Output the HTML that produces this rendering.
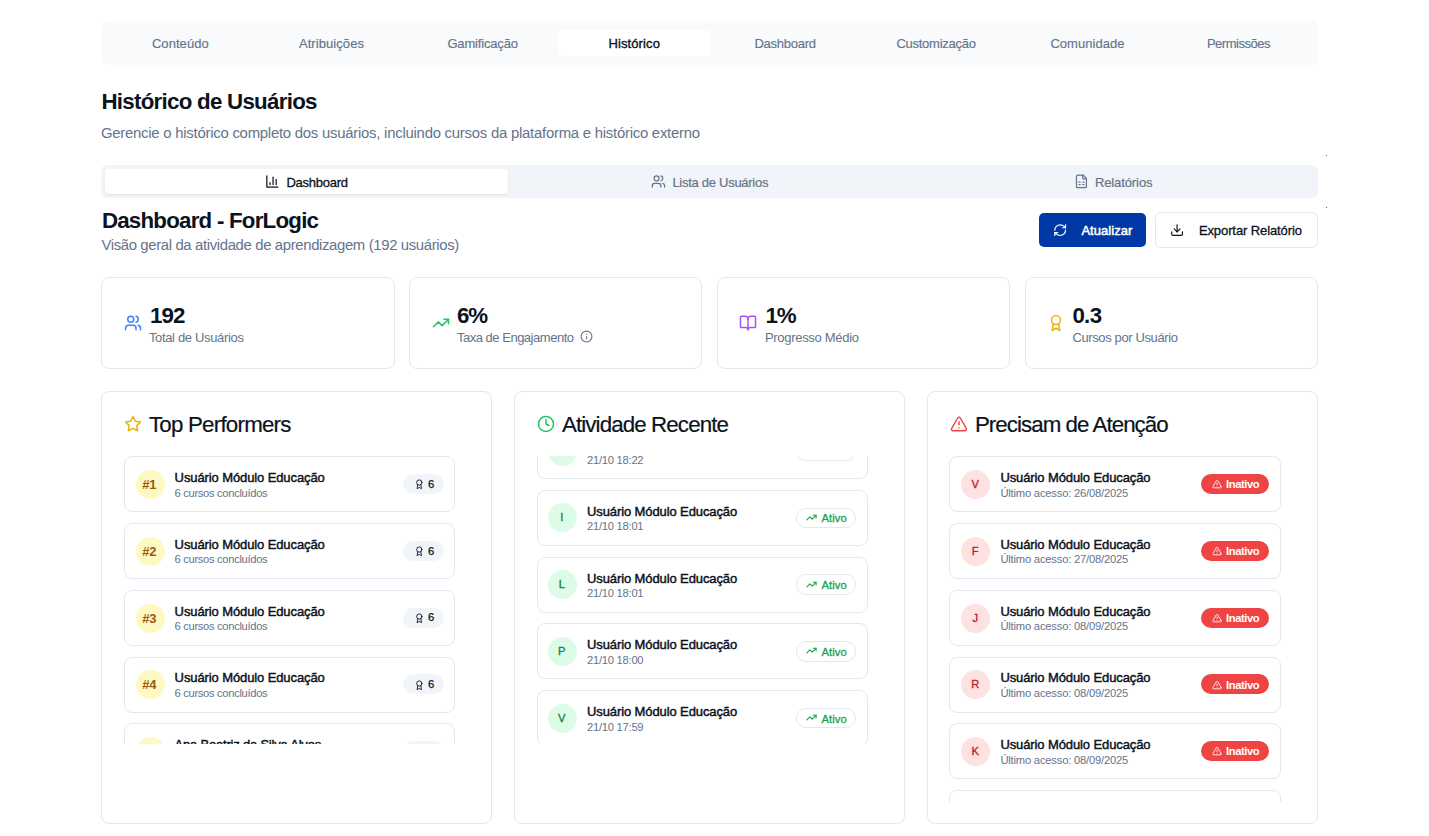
<!DOCTYPE html>
<html lang="pt-BR"><head><meta charset="utf-8"><title>Histórico de Usuários</title><style>
html,body{margin:0;padding:0;background:#fff;}
body{width:1429px;height:836px;overflow:hidden;position:relative;font-family:"Liberation Sans",Arial,sans-serif;}
body div,body svg{position:absolute;}
.t{white-space:nowrap;line-height:1;}
.clip{overflow:hidden;}
</style></head><body>
<div style="left:101.00px;top:21.00px;width:1217.00px;height:44.00px;background:#f8fafc;border-radius:7px;"></div>
<div style="left:558.00px;top:30.00px;width:152.00px;height:26.00px;background:#fff;border-radius:5px;"></div>
<div class="t" style="left:151.90px;top:37.00px;font-size:13px;color:#64748b;letter-spacing:0.068px;-webkit-text-stroke:0.15px #64748b;">Conteúdo</div>
<div class="t" style="left:298.90px;top:37.00px;font-size:13px;color:#64748b;letter-spacing:0.073px;-webkit-text-stroke:0.15px #64748b;">Atribuições</div>
<div class="t" style="left:447.40px;top:37.00px;font-size:13px;color:#64748b;letter-spacing:-0.165px;-webkit-text-stroke:0.15px #64748b;">Gamificação</div>
<div class="t" style="left:608.40px;top:37.00px;font-size:13px;color:#0b1220;letter-spacing:0.122px;-webkit-text-stroke:0.35px #0b1220;">Histórico</div>
<div class="t" style="left:754.40px;top:37.00px;font-size:13px;color:#64748b;letter-spacing:-0.253px;-webkit-text-stroke:0.15px #64748b;">Dashboard</div>
<div class="t" style="left:896.40px;top:37.00px;font-size:13px;color:#64748b;letter-spacing:-0.252px;-webkit-text-stroke:0.15px #64748b;">Customização</div>
<div class="t" style="left:1050.40px;top:37.00px;font-size:13px;color:#64748b;letter-spacing:0.039px;-webkit-text-stroke:0.15px #64748b;">Comunidade</div>
<div class="t" style="left:1206.90px;top:37.00px;font-size:13px;color:#64748b;letter-spacing:-0.475px;-webkit-text-stroke:0.15px #64748b;">Permissões</div>
<div class="t" style="left:101.40px;top:91.12px;font-size:22.3px;color:#0b1220;letter-spacing:-0.721px;font-weight:700;">Histórico de Usuários</div>
<div class="t" style="left:100.90px;top:126.39px;font-size:14.9px;color:#64748b;letter-spacing:-0.241px;">Gerencie o histórico completo dos usuários, incluindo cursos da plataforma e histórico externo</div>
<div style="left:101.00px;top:165.00px;width:1217.00px;height:33.00px;background:#f1f5f9;border-radius:6px;"></div>
<div style="left:105.00px;top:169.00px;width:403.00px;height:25.00px;background:#fff;border-radius:4px;box-shadow:0 1px 2px rgba(0,0,0,.08);"></div>
<svg class="ic" style="left:264.80px;top:173.80px" width="14.9" height="14.9" viewBox="0 0 24 24" fill="none" stroke="#0b1220" stroke-width="2" stroke-linecap="round" stroke-linejoin="round"><path d="M3 3v18h18"/><path d="M18 17V9"/><path d="M13 17V5"/><path d="M8 17v-3"/></svg>
<div class="t" style="left:286.40px;top:176.00px;font-size:13px;color:#0b1220;letter-spacing:-0.253px;-webkit-text-stroke:0.3px #0b1220;">Dashboard</div>
<svg class="ic" style="left:650.90px;top:173.80px" width="14.9" height="14.9" viewBox="0 0 24 24" fill="none" stroke="#64748b" stroke-width="2" stroke-linecap="round" stroke-linejoin="round"><path d="M16 21v-2a4 4 0 0 0-4-4H6a4 4 0 0 0-4 4v2"/><circle cx="9" cy="7" r="4"/><path d="M22 21v-2a4 4 0 0 0-3-3.87"/><path d="M16 3.13a4 4 0 0 1 0 7.75"/></svg>
<div class="t" style="left:672.40px;top:176.00px;font-size:13px;color:#64748b;letter-spacing:-0.275px;-webkit-text-stroke:0.2px #64748b;">Lista de Usuários</div>
<svg class="ic" style="left:1073.60px;top:173.90px" width="14.9" height="14.9" viewBox="0 0 24 24" fill="none" stroke="#64748b" stroke-width="2" stroke-linecap="round" stroke-linejoin="round"><path d="M15 2H6a2 2 0 0 0-2 2v16a2 2 0 0 0 2 2h12a2 2 0 0 0 2-2V7Z"/><path d="M14 2v4a2 2 0 0 0 2 2h4"/><path d="M8 13h2"/><path d="M14 13h2"/><path d="M8 17h2"/><path d="M14 17h2"/></svg>
<div class="t" style="left:1094.90px;top:176.00px;font-size:13px;color:#64748b;letter-spacing:-0.100px;-webkit-text-stroke:0.2px #64748b;">Relatórios</div>
<div style="left:1325.50px;top:154.50px;width:1.00px;height:1.00px;background:#e33;"></div>
<div style="left:1326.00px;top:206.50px;width:1.00px;height:1.00px;background:#e33;"></div>
<div class="t" style="left:101.90px;top:210.12px;font-size:22.3px;color:#0b1220;letter-spacing:-0.765px;font-weight:700;">Dashboard - ForLogic</div>
<div class="t" style="left:101.40px;top:237.89px;font-size:14.9px;color:#64748b;letter-spacing:-0.359px;">Visão geral da atividade de aprendizagem (192 usuários)</div>
<div style="left:1039.00px;top:213.00px;width:107.00px;height:34.00px;background:#0039a6;border-radius:5px;"></div>
<svg class="ic" style="left:1052.80px;top:223.00px" width="14.3" height="14.3" viewBox="0 0 24 24" fill="none" stroke="#fff" stroke-width="2" stroke-linecap="round" stroke-linejoin="round"><path d="M3 12a9 9 0 0 1 9-9 9.75 9.75 0 0 1 6.74 2.74L21 8"/><path d="M21 3v5h-5"/><path d="M21 12a9 9 0 0 1-9 9 9.75 9.75 0 0 1-6.74-2.74L3 16"/><path d="M8 16H3v5"/></svg>
<div class="t" style="left:1081.40px;top:224.00px;font-size:13px;color:#fff;letter-spacing:0.059px;-webkit-text-stroke:0.5px #fff;">Atualizar</div>
<div style="left:1155.00px;top:212.00px;width:163.00px;height:36.00px;background:#fff;border:1px solid #e2e8f0;border-radius:6px;box-sizing:border-box;"></div>
<svg class="ic" style="left:1169.90px;top:223.00px" width="14.2" height="14.2" viewBox="0 0 24 24" fill="none" stroke="#0b1220" stroke-width="2" stroke-linecap="round" stroke-linejoin="round"><path d="M21 15v4a2 2 0 0 1-2 2H5a2 2 0 0 1-2-2v-4"/><polyline points="7 10 12 15 17 10"/><line x1="12" x2="12" y1="15" y2="3"/></svg>
<div class="t" style="left:1198.90px;top:224.00px;font-size:13px;color:#0b1220;letter-spacing:-0.097px;-webkit-text-stroke:0.3px #0b1220;">Exportar Relatório</div>
<div style="left:101.00px;top:277.00px;width:294.00px;height:92.00px;background:#fff;border:1px solid #e2e8f0;border-radius:8px;box-sizing:border-box;"></div>
<svg class="ic" style="left:124.25px;top:314.30px" width="18" height="18" viewBox="0 0 24 24" fill="none" stroke="#3b82f6" stroke-width="2" stroke-linecap="round" stroke-linejoin="round"><path d="M16 21v-2a4 4 0 0 0-4-4H6a4 4 0 0 0-4 4v2"/><circle cx="9" cy="7" r="4"/><path d="M22 21v-2a4 4 0 0 0-3-3.87"/><path d="M16 3.13a4 4 0 0 1 0 7.75"/></svg>
<div class="t" style="left:149.90px;top:305.12px;font-size:22.3px;color:#0b1220;letter-spacing:-0.804px;font-weight:700;">192</div>
<div class="t" style="left:148.90px;top:331.00px;font-size:13px;color:#64748b;letter-spacing:-0.338px;">Total de Usuários</div>
<div style="left:409.00px;top:277.00px;width:293.00px;height:92.00px;background:#fff;border:1px solid #e2e8f0;border-radius:8px;box-sizing:border-box;"></div>
<svg class="ic" style="left:432.25px;top:314.30px" width="18" height="18" viewBox="0 0 24 24" fill="none" stroke="#22c55e" stroke-width="2" stroke-linecap="round" stroke-linejoin="round"><polyline points="22 7 13.5 15.5 8.5 10.5 2 17"/><polyline points="16 7 22 7 22 13"/></svg>
<div class="t" style="left:456.90px;top:305.12px;font-size:22.3px;color:#0b1220;letter-spacing:-1.097px;font-weight:700;">6%</div>
<div class="t" style="left:456.90px;top:331.00px;font-size:13px;color:#64748b;letter-spacing:-0.481px;">Taxa de Engajamento</div>
<div style="left:717.00px;top:277.00px;width:293.00px;height:92.00px;background:#fff;border:1px solid #e2e8f0;border-radius:8px;box-sizing:border-box;"></div>
<svg class="ic" style="left:738.75px;top:314.30px" width="18" height="18" viewBox="0 0 24 24" fill="none" stroke="#a855f7" stroke-width="2" stroke-linecap="round" stroke-linejoin="round"><path d="M12 7v14"/><path d="M3 18a1 1 0 0 1-1-1V4a1 1 0 0 1 1-1h5a4 4 0 0 1 4 4 4 4 0 0 1 4-4h5a1 1 0 0 1 1 1v13a1 1 0 0 1-1 1h-6a3 3 0 0 0-3 3 3 3 0 0 0-3-3z"/></svg>
<div class="t" style="left:765.40px;top:305.12px;font-size:22.3px;color:#0b1220;letter-spacing:-1.097px;font-weight:700;">1%</div>
<div class="t" style="left:764.90px;top:331.00px;font-size:13px;color:#64748b;letter-spacing:-0.296px;">Progresso Médio</div>
<div style="left:1025.00px;top:277.00px;width:293.00px;height:92.00px;background:#fff;border:1px solid #e2e8f0;border-radius:8px;box-sizing:border-box;"></div>
<svg class="ic" style="left:1046.75px;top:314.30px" width="18" height="18" viewBox="0 0 24 24" fill="none" stroke="#eab308" stroke-width="2" stroke-linecap="round" stroke-linejoin="round"><circle cx="12" cy="8" r="6"/><path d="M15.477 12.89 17 22l-5-3-5 3 1.523-9.11"/></svg>
<div class="t" style="left:1072.40px;top:305.12px;font-size:22.3px;color:#0b1220;letter-spacing:-0.672px;font-weight:700;">0.3</div>
<div class="t" style="left:1072.40px;top:331.00px;font-size:13px;color:#64748b;letter-spacing:-0.376px;">Cursos por Usuário</div>
<svg class="ic" style="left:580.00px;top:330.40px" width="13" height="13" viewBox="0 0 24 24" fill="none" stroke="#64748b" stroke-width="2" stroke-linecap="round" stroke-linejoin="round"><circle cx="12" cy="12" r="10"/><path d="M12 16v-4"/><path d="M12 8h.01"/></svg>
<div style="left:101.00px;top:391.00px;width:391.00px;height:433.00px;background:#fff;border:1px solid #e2e8f0;border-radius:8px;box-sizing:border-box;"></div>
<svg class="ic" style="left:124.25px;top:415.40px" width="18" height="18" viewBox="0 0 24 24" fill="none" stroke="#eab308" stroke-width="2" stroke-linecap="round" stroke-linejoin="round"><polygon points="12 2 15.09 8.26 22 9.27 17 14.14 18.18 21.02 12 17.77 5.82 21.02 7 14.14 2 9.27 8.91 8.26 12 2"/></svg>
<div class="t" style="left:148.90px;top:413.62px;font-size:22.3px;color:#0b1220;letter-spacing:-0.759px;-webkit-text-stroke:0.2px #0b1220;">Top Performers</div>
<div style="left:514.00px;top:391.00px;width:391.00px;height:433.00px;background:#fff;border:1px solid #e2e8f0;border-radius:8px;box-sizing:border-box;"></div>
<svg class="ic" style="left:536.75px;top:415.40px" width="18" height="18" viewBox="0 0 24 24" fill="none" stroke="#22c55e" stroke-width="2" stroke-linecap="round" stroke-linejoin="round"><circle cx="12" cy="12" r="10"/><polyline points="12 6 12 12 16 14"/></svg>
<div class="t" style="left:561.90px;top:413.62px;font-size:22.3px;color:#0b1220;letter-spacing:-0.871px;-webkit-text-stroke:0.2px #0b1220;">Atividade Recente</div>
<div style="left:927.30px;top:391.00px;width:391.00px;height:433.00px;background:#fff;border:1px solid #e2e8f0;border-radius:8px;box-sizing:border-box;"></div>
<svg class="ic" style="left:949.50px;top:415.40px" width="18" height="18" viewBox="0 0 24 24" fill="none" stroke="#ef4444" stroke-width="2" stroke-linecap="round" stroke-linejoin="round"><path d="m21.73 18-8-14a2 2 0 0 0-3.48 0l-8 14A2 2 0 0 0 4 21h16a2 2 0 0 0 1.73-3Z"/><path d="M12 9v4"/><path d="M12 17h.01"/></svg>
<div class="t" style="left:974.90px;top:413.62px;font-size:22.3px;color:#0b1220;letter-spacing:-0.940px;-webkit-text-stroke:0.2px #0b1220;">Precisam de Atenção</div>
<div class="clip" style="left:124.00px;top:456.00px;width:333.00px;height:287.50px">
<div style="left:0.00px;top:0.00px;width:331.00px;height:56.00px;border:1px solid #e2e8f0;border-radius:8px;box-sizing:border-box;background:#fff;"></div>
<div style="left:11.50px;top:14.00px;width:29.00px;height:29.00px;background:#fef9c3;border-radius:50%;"></div>
<div class="t" style="left:18.15px;top:22.00px;font-size:13px;color:#9a5b08;font-weight:700;">#1</div>
<div class="t" style="left:50.60px;top:15.00px;font-size:13px;color:#0b1220;letter-spacing:-0.105px;-webkit-text-stroke:0.45px #0b1220;">Usuário Módulo Educação</div>
<div class="t" style="left:50.60px;top:31.52px;font-size:11.2px;color:#64748b;letter-spacing:-0.324px;">6 cursos concluídos</div>
<div style="left:278.50px;top:18.00px;width:41.00px;height:20.00px;background:#f1f5f9;border-radius:10px;"></div>
<svg class="ic" style="left:289.50px;top:23.20px" width="10.6" height="10.6" viewBox="0 0 24 24" fill="none" stroke="#0b1220" stroke-width="2" stroke-linecap="round" stroke-linejoin="round"><circle cx="12" cy="8" r="6"/><path d="M15.477 12.89 17 22l-5-3-5 3 1.523-9.11"/></svg>
<div class="t" style="left:304.00px;top:22.82px;font-size:11.2px;color:#0b1220;-webkit-text-stroke:0.25px #0b1220;">6</div>
<div style="left:0.00px;top:67.00px;width:331.00px;height:56.00px;border:1px solid #e2e8f0;border-radius:8px;box-sizing:border-box;background:#fff;"></div>
<div style="left:11.50px;top:80.80px;width:29.00px;height:29.00px;background:#fef9c3;border-radius:50%;"></div>
<div class="t" style="left:18.15px;top:88.80px;font-size:13px;color:#9a5b08;font-weight:700;">#2</div>
<div class="t" style="left:50.60px;top:81.80px;font-size:13px;color:#0b1220;letter-spacing:-0.105px;-webkit-text-stroke:0.45px #0b1220;">Usuário Módulo Educação</div>
<div class="t" style="left:50.60px;top:98.32px;font-size:11.2px;color:#64748b;letter-spacing:-0.324px;">6 cursos concluídos</div>
<div style="left:278.50px;top:84.80px;width:41.00px;height:20.00px;background:#f1f5f9;border-radius:10px;"></div>
<svg class="ic" style="left:289.50px;top:90.00px" width="10.6" height="10.6" viewBox="0 0 24 24" fill="none" stroke="#0b1220" stroke-width="2" stroke-linecap="round" stroke-linejoin="round"><circle cx="12" cy="8" r="6"/><path d="M15.477 12.89 17 22l-5-3-5 3 1.523-9.11"/></svg>
<div class="t" style="left:304.00px;top:89.62px;font-size:11.2px;color:#0b1220;-webkit-text-stroke:0.25px #0b1220;">6</div>
<div style="left:0.00px;top:134.00px;width:331.00px;height:56.00px;border:1px solid #e2e8f0;border-radius:8px;box-sizing:border-box;background:#fff;"></div>
<div style="left:11.50px;top:147.60px;width:29.00px;height:29.00px;background:#fef9c3;border-radius:50%;"></div>
<div class="t" style="left:18.15px;top:155.60px;font-size:13px;color:#9a5b08;font-weight:700;">#3</div>
<div class="t" style="left:50.60px;top:148.60px;font-size:13px;color:#0b1220;letter-spacing:-0.105px;-webkit-text-stroke:0.45px #0b1220;">Usuário Módulo Educação</div>
<div class="t" style="left:50.60px;top:165.12px;font-size:11.2px;color:#64748b;letter-spacing:-0.324px;">6 cursos concluídos</div>
<div style="left:278.50px;top:151.60px;width:41.00px;height:20.00px;background:#f1f5f9;border-radius:10px;"></div>
<svg class="ic" style="left:289.50px;top:156.80px" width="10.6" height="10.6" viewBox="0 0 24 24" fill="none" stroke="#0b1220" stroke-width="2" stroke-linecap="round" stroke-linejoin="round"><circle cx="12" cy="8" r="6"/><path d="M15.477 12.89 17 22l-5-3-5 3 1.523-9.11"/></svg>
<div class="t" style="left:304.00px;top:156.42px;font-size:11.2px;color:#0b1220;-webkit-text-stroke:0.25px #0b1220;">6</div>
<div style="left:0.00px;top:201.00px;width:331.00px;height:56.00px;border:1px solid #e2e8f0;border-radius:8px;box-sizing:border-box;background:#fff;"></div>
<div style="left:11.50px;top:214.40px;width:29.00px;height:29.00px;background:#fef9c3;border-radius:50%;"></div>
<div class="t" style="left:18.15px;top:222.40px;font-size:13px;color:#9a5b08;font-weight:700;">#4</div>
<div class="t" style="left:50.60px;top:215.40px;font-size:13px;color:#0b1220;letter-spacing:-0.105px;-webkit-text-stroke:0.45px #0b1220;">Usuário Módulo Educação</div>
<div class="t" style="left:50.60px;top:231.92px;font-size:11.2px;color:#64748b;letter-spacing:-0.324px;">6 cursos concluídos</div>
<div style="left:278.50px;top:218.40px;width:41.00px;height:20.00px;background:#f1f5f9;border-radius:10px;"></div>
<svg class="ic" style="left:289.50px;top:223.60px" width="10.6" height="10.6" viewBox="0 0 24 24" fill="none" stroke="#0b1220" stroke-width="2" stroke-linecap="round" stroke-linejoin="round"><circle cx="12" cy="8" r="6"/><path d="M15.477 12.89 17 22l-5-3-5 3 1.523-9.11"/></svg>
<div class="t" style="left:304.00px;top:223.22px;font-size:11.2px;color:#0b1220;-webkit-text-stroke:0.25px #0b1220;">6</div>
<div style="left:0.00px;top:267.00px;width:331.00px;height:56.00px;border:1px solid #e2e8f0;border-radius:8px;box-sizing:border-box;background:#fff;"></div>
<div style="left:11.50px;top:281.20px;width:29.00px;height:29.00px;background:#fef9c3;border-radius:50%;"></div>
<div class="t" style="left:18.15px;top:289.20px;font-size:13px;color:#9a5b08;font-weight:700;">#5</div>
<div class="t" style="left:50.60px;top:282.20px;font-size:13px;color:#0b1220;letter-spacing:-0.206px;-webkit-text-stroke:0.45px #0b1220;">Ana Beatriz da Silva Alves</div>
<div class="t" style="left:50.60px;top:298.72px;font-size:11.2px;color:#64748b;letter-spacing:-0.324px;">6 cursos concluídos</div>
<div style="left:278.50px;top:285.20px;width:41.00px;height:20.00px;background:#f1f5f9;border-radius:10px;"></div>
<svg class="ic" style="left:289.50px;top:290.40px" width="10.6" height="10.6" viewBox="0 0 24 24" fill="none" stroke="#0b1220" stroke-width="2" stroke-linecap="round" stroke-linejoin="round"><circle cx="12" cy="8" r="6"/><path d="M15.477 12.89 17 22l-5-3-5 3 1.523-9.11"/></svg>
<div class="t" style="left:304.00px;top:290.02px;font-size:11.2px;color:#0b1220;-webkit-text-stroke:0.25px #0b1220;">6</div>
</div>
<div class="clip" style="left:537.00px;top:456.00px;width:333.00px;height:287.50px">
<div style="left:0.00px;top:-33.00px;width:331.00px;height:56.00px;border:1px solid #e2e8f0;border-radius:8px;box-sizing:border-box;background:#fff;"></div>
<div style="left:10.90px;top:-19.50px;width:29.00px;height:29.00px;background:#dcfce7;border-radius:50%;"></div>
<div class="t" style="left:20.44px;top:-10.48px;font-size:11.2px;color:#15803d;-webkit-text-stroke:0.3px #15803d;">G</div>
<div class="t" style="left:50.00px;top:-18.00px;font-size:13px;color:#0b1220;letter-spacing:-0.105px;-webkit-text-stroke:0.45px #0b1220;">Usuário Módulo Educação</div>
<div class="t" style="left:50.00px;top:-1.48px;font-size:11.2px;color:#64748b;letter-spacing:-0.251px;">21/10 18:22</div>
<div style="left:258.50px;top:-15.20px;width:60.30px;height:20.40px;border:1px solid #e2e8f0;border-radius:10px;box-sizing:border-box;background:#fff;"></div>
<svg class="ic" style="left:268.80px;top:-11.00px" width="11" height="11" viewBox="0 0 24 24" fill="none" stroke="#16a34a" stroke-width="2.4" stroke-linecap="round" stroke-linejoin="round"><polyline points="22 7 13.5 15.5 8.5 10.5 2 17"/><polyline points="16 7 22 7 22 13"/></svg>
<div class="t" style="left:284.40px;top:-9.68px;font-size:11.2px;color:#16a34a;letter-spacing:0.128px;-webkit-text-stroke:0.3px #16a34a;">Ativo</div>
<div style="left:0.00px;top:34.00px;width:331.00px;height:56.00px;border:1px solid #e2e8f0;border-radius:8px;box-sizing:border-box;background:#fff;"></div>
<div style="left:10.90px;top:47.30px;width:29.00px;height:29.00px;background:#dcfce7;border-radius:50%;"></div>
<div class="t" style="left:23.24px;top:56.32px;font-size:11.2px;color:#15803d;-webkit-text-stroke:0.3px #15803d;">I</div>
<div class="t" style="left:50.00px;top:48.80px;font-size:13px;color:#0b1220;letter-spacing:-0.105px;-webkit-text-stroke:0.45px #0b1220;">Usuário Módulo Educação</div>
<div class="t" style="left:50.00px;top:65.32px;font-size:11.2px;color:#64748b;letter-spacing:-0.251px;">21/10 18:01</div>
<div style="left:258.50px;top:51.60px;width:60.30px;height:20.40px;border:1px solid #e2e8f0;border-radius:10px;box-sizing:border-box;background:#fff;"></div>
<svg class="ic" style="left:268.80px;top:55.80px" width="11" height="11" viewBox="0 0 24 24" fill="none" stroke="#16a34a" stroke-width="2.4" stroke-linecap="round" stroke-linejoin="round"><polyline points="22 7 13.5 15.5 8.5 10.5 2 17"/><polyline points="16 7 22 7 22 13"/></svg>
<div class="t" style="left:284.40px;top:57.12px;font-size:11.2px;color:#16a34a;letter-spacing:0.128px;-webkit-text-stroke:0.3px #16a34a;">Ativo</div>
<div style="left:0.00px;top:101.00px;width:331.00px;height:56.00px;border:1px solid #e2e8f0;border-radius:8px;box-sizing:border-box;background:#fff;"></div>
<div style="left:10.90px;top:114.10px;width:29.00px;height:29.00px;background:#dcfce7;border-radius:50%;"></div>
<div class="t" style="left:21.69px;top:123.12px;font-size:11.2px;color:#15803d;-webkit-text-stroke:0.3px #15803d;">L</div>
<div class="t" style="left:50.00px;top:115.60px;font-size:13px;color:#0b1220;letter-spacing:-0.105px;-webkit-text-stroke:0.45px #0b1220;">Usuário Módulo Educação</div>
<div class="t" style="left:50.00px;top:132.12px;font-size:11.2px;color:#64748b;letter-spacing:-0.251px;">21/10 18:01</div>
<div style="left:258.50px;top:118.40px;width:60.30px;height:20.40px;border:1px solid #e2e8f0;border-radius:10px;box-sizing:border-box;background:#fff;"></div>
<svg class="ic" style="left:268.80px;top:122.60px" width="11" height="11" viewBox="0 0 24 24" fill="none" stroke="#16a34a" stroke-width="2.4" stroke-linecap="round" stroke-linejoin="round"><polyline points="22 7 13.5 15.5 8.5 10.5 2 17"/><polyline points="16 7 22 7 22 13"/></svg>
<div class="t" style="left:284.40px;top:123.92px;font-size:11.2px;color:#16a34a;letter-spacing:0.128px;-webkit-text-stroke:0.3px #16a34a;">Ativo</div>
<div style="left:0.00px;top:167.00px;width:331.00px;height:56.00px;border:1px solid #e2e8f0;border-radius:8px;box-sizing:border-box;background:#fff;"></div>
<div style="left:10.90px;top:180.90px;width:29.00px;height:29.00px;background:#dcfce7;border-radius:50%;"></div>
<div class="t" style="left:21.07px;top:189.92px;font-size:11.2px;color:#15803d;-webkit-text-stroke:0.3px #15803d;">P</div>
<div class="t" style="left:50.00px;top:182.40px;font-size:13px;color:#0b1220;letter-spacing:-0.105px;-webkit-text-stroke:0.45px #0b1220;">Usuário Módulo Educação</div>
<div class="t" style="left:50.00px;top:198.92px;font-size:11.2px;color:#64748b;letter-spacing:-0.251px;">21/10 18:00</div>
<div style="left:258.50px;top:185.20px;width:60.30px;height:20.40px;border:1px solid #e2e8f0;border-radius:10px;box-sizing:border-box;background:#fff;"></div>
<svg class="ic" style="left:268.80px;top:189.40px" width="11" height="11" viewBox="0 0 24 24" fill="none" stroke="#16a34a" stroke-width="2.4" stroke-linecap="round" stroke-linejoin="round"><polyline points="22 7 13.5 15.5 8.5 10.5 2 17"/><polyline points="16 7 22 7 22 13"/></svg>
<div class="t" style="left:284.40px;top:190.72px;font-size:11.2px;color:#16a34a;letter-spacing:0.128px;-webkit-text-stroke:0.3px #16a34a;">Ativo</div>
<div style="left:0.00px;top:234.00px;width:331.00px;height:56.00px;border:1px solid #e2e8f0;border-radius:8px;box-sizing:border-box;background:#fff;"></div>
<div style="left:10.90px;top:247.70px;width:29.00px;height:29.00px;background:#dcfce7;border-radius:50%;"></div>
<div class="t" style="left:21.07px;top:256.72px;font-size:11.2px;color:#15803d;-webkit-text-stroke:0.3px #15803d;">V</div>
<div class="t" style="left:50.00px;top:249.20px;font-size:13px;color:#0b1220;letter-spacing:-0.105px;-webkit-text-stroke:0.45px #0b1220;">Usuário Módulo Educação</div>
<div class="t" style="left:50.00px;top:265.72px;font-size:11.2px;color:#64748b;letter-spacing:-0.251px;">21/10 17:59</div>
<div style="left:258.50px;top:252.00px;width:60.30px;height:20.40px;border:1px solid #e2e8f0;border-radius:10px;box-sizing:border-box;background:#fff;"></div>
<svg class="ic" style="left:268.80px;top:256.20px" width="11" height="11" viewBox="0 0 24 24" fill="none" stroke="#16a34a" stroke-width="2.4" stroke-linecap="round" stroke-linejoin="round"><polyline points="22 7 13.5 15.5 8.5 10.5 2 17"/><polyline points="16 7 22 7 22 13"/></svg>
<div class="t" style="left:284.40px;top:257.52px;font-size:11.2px;color:#16a34a;letter-spacing:0.128px;-webkit-text-stroke:0.3px #16a34a;">Ativo</div>
<div style="left:0.00px;top:301.00px;width:331.00px;height:56.00px;border:1px solid #e2e8f0;border-radius:8px;box-sizing:border-box;background:#fff;"></div>
<div style="left:10.90px;top:314.50px;width:29.00px;height:29.00px;background:#dcfce7;border-radius:50%;"></div>
<div class="t" style="left:20.13px;top:323.52px;font-size:11.2px;color:#15803d;-webkit-text-stroke:0.3px #15803d;">M</div>
<div class="t" style="left:50.00px;top:316.00px;font-size:13px;color:#0b1220;letter-spacing:-0.105px;-webkit-text-stroke:0.45px #0b1220;">Usuário Módulo Educação</div>
<div class="t" style="left:50.00px;top:332.52px;font-size:11.2px;color:#64748b;letter-spacing:-0.251px;">21/10 17:58</div>
<div style="left:258.50px;top:318.80px;width:60.30px;height:20.40px;border:1px solid #e2e8f0;border-radius:10px;box-sizing:border-box;background:#fff;"></div>
<svg class="ic" style="left:268.80px;top:323.00px" width="11" height="11" viewBox="0 0 24 24" fill="none" stroke="#16a34a" stroke-width="2.4" stroke-linecap="round" stroke-linejoin="round"><polyline points="22 7 13.5 15.5 8.5 10.5 2 17"/><polyline points="16 7 22 7 22 13"/></svg>
<div class="t" style="left:284.40px;top:324.32px;font-size:11.2px;color:#16a34a;letter-spacing:0.128px;-webkit-text-stroke:0.3px #16a34a;">Ativo</div>
</div>
<div class="clip" style="left:948.60px;top:456.00px;width:334.00px;height:346.00px">
<div style="left:0.00px;top:0.00px;width:332.00px;height:56.00px;border:1px solid #e2e8f0;border-radius:8px;box-sizing:border-box;background:#fff;"></div>
<div style="left:12.70px;top:14.00px;width:29.00px;height:29.00px;background:#fee2e2;border-radius:50%;"></div>
<div class="t" style="left:22.87px;top:23.02px;font-size:11.2px;color:#b91c1c;-webkit-text-stroke:0.3px #b91c1c;">V</div>
<div class="t" style="left:51.80px;top:15.00px;font-size:13px;color:#0b1220;letter-spacing:-0.105px;-webkit-text-stroke:0.45px #0b1220;">Usuário Módulo Educação</div>
<div class="t" style="left:51.80px;top:31.52px;font-size:11.2px;color:#64748b;letter-spacing:-0.190px;">Último acesso: 26/08/2025</div>
<div style="left:252.50px;top:18.00px;width:68.00px;height:20.00px;background:#ef4444;border-radius:10px;"></div>
<svg class="ic" style="left:263.00px;top:23.20px" width="10.1" height="10.1" viewBox="0 0 24 24" fill="none" stroke="#fff" stroke-width="2" stroke-linecap="round" stroke-linejoin="round"><path d="m21.73 18-8-14a2 2 0 0 0-3.48 0l-8 14A2 2 0 0 0 4 21h16a2 2 0 0 0 1.73-3Z"/><path d="M12 9v4"/><path d="M12 17h.01"/></svg>
<div class="t" style="left:277.50px;top:23.12px;font-size:11.2px;color:#fff;letter-spacing:-0.431px;font-weight:700;">Inativo</div>
<div style="left:0.00px;top:67.00px;width:332.00px;height:56.00px;border:1px solid #e2e8f0;border-radius:8px;box-sizing:border-box;background:#fff;"></div>
<div style="left:12.70px;top:80.80px;width:29.00px;height:29.00px;background:#fee2e2;border-radius:50%;"></div>
<div class="t" style="left:23.18px;top:89.82px;font-size:11.2px;color:#b91c1c;-webkit-text-stroke:0.3px #b91c1c;">F</div>
<div class="t" style="left:51.80px;top:81.80px;font-size:13px;color:#0b1220;letter-spacing:-0.105px;-webkit-text-stroke:0.45px #0b1220;">Usuário Módulo Educação</div>
<div class="t" style="left:51.80px;top:98.32px;font-size:11.2px;color:#64748b;letter-spacing:-0.190px;">Último acesso: 27/08/2025</div>
<div style="left:252.50px;top:84.80px;width:68.00px;height:20.00px;background:#ef4444;border-radius:10px;"></div>
<svg class="ic" style="left:263.00px;top:90.00px" width="10.1" height="10.1" viewBox="0 0 24 24" fill="none" stroke="#fff" stroke-width="2" stroke-linecap="round" stroke-linejoin="round"><path d="m21.73 18-8-14a2 2 0 0 0-3.48 0l-8 14A2 2 0 0 0 4 21h16a2 2 0 0 0 1.73-3Z"/><path d="M12 9v4"/><path d="M12 17h.01"/></svg>
<div class="t" style="left:277.50px;top:89.92px;font-size:11.2px;color:#fff;letter-spacing:-0.431px;font-weight:700;">Inativo</div>
<div style="left:0.00px;top:134.00px;width:332.00px;height:56.00px;border:1px solid #e2e8f0;border-radius:8px;box-sizing:border-box;background:#fff;"></div>
<div style="left:12.70px;top:147.60px;width:29.00px;height:29.00px;background:#fee2e2;border-radius:50%;"></div>
<div class="t" style="left:23.80px;top:156.62px;font-size:11.2px;color:#b91c1c;-webkit-text-stroke:0.3px #b91c1c;">J</div>
<div class="t" style="left:51.80px;top:148.60px;font-size:13px;color:#0b1220;letter-spacing:-0.105px;-webkit-text-stroke:0.45px #0b1220;">Usuário Módulo Educação</div>
<div class="t" style="left:51.80px;top:165.12px;font-size:11.2px;color:#64748b;letter-spacing:-0.190px;">Último acesso: 08/09/2025</div>
<div style="left:252.50px;top:151.60px;width:68.00px;height:20.00px;background:#ef4444;border-radius:10px;"></div>
<svg class="ic" style="left:263.00px;top:156.80px" width="10.1" height="10.1" viewBox="0 0 24 24" fill="none" stroke="#fff" stroke-width="2" stroke-linecap="round" stroke-linejoin="round"><path d="m21.73 18-8-14a2 2 0 0 0-3.48 0l-8 14A2 2 0 0 0 4 21h16a2 2 0 0 0 1.73-3Z"/><path d="M12 9v4"/><path d="M12 17h.01"/></svg>
<div class="t" style="left:277.50px;top:156.72px;font-size:11.2px;color:#fff;letter-spacing:-0.431px;font-weight:700;">Inativo</div>
<div style="left:0.00px;top:201.00px;width:332.00px;height:56.00px;border:1px solid #e2e8f0;border-radius:8px;box-sizing:border-box;background:#fff;"></div>
<div style="left:12.70px;top:214.40px;width:29.00px;height:29.00px;background:#fee2e2;border-radius:50%;"></div>
<div class="t" style="left:22.56px;top:223.42px;font-size:11.2px;color:#b91c1c;-webkit-text-stroke:0.3px #b91c1c;">R</div>
<div class="t" style="left:51.80px;top:215.40px;font-size:13px;color:#0b1220;letter-spacing:-0.105px;-webkit-text-stroke:0.45px #0b1220;">Usuário Módulo Educação</div>
<div class="t" style="left:51.80px;top:231.92px;font-size:11.2px;color:#64748b;letter-spacing:-0.190px;">Último acesso: 08/09/2025</div>
<div style="left:252.50px;top:218.40px;width:68.00px;height:20.00px;background:#ef4444;border-radius:10px;"></div>
<svg class="ic" style="left:263.00px;top:223.60px" width="10.1" height="10.1" viewBox="0 0 24 24" fill="none" stroke="#fff" stroke-width="2" stroke-linecap="round" stroke-linejoin="round"><path d="m21.73 18-8-14a2 2 0 0 0-3.48 0l-8 14A2 2 0 0 0 4 21h16a2 2 0 0 0 1.73-3Z"/><path d="M12 9v4"/><path d="M12 17h.01"/></svg>
<div class="t" style="left:277.50px;top:223.52px;font-size:11.2px;color:#fff;letter-spacing:-0.431px;font-weight:700;">Inativo</div>
<div style="left:0.00px;top:267.00px;width:332.00px;height:56.00px;border:1px solid #e2e8f0;border-radius:8px;box-sizing:border-box;background:#fff;"></div>
<div style="left:12.70px;top:281.20px;width:29.00px;height:29.00px;background:#fee2e2;border-radius:50%;"></div>
<div class="t" style="left:22.87px;top:290.22px;font-size:11.2px;color:#b91c1c;-webkit-text-stroke:0.3px #b91c1c;">K</div>
<div class="t" style="left:51.80px;top:282.20px;font-size:13px;color:#0b1220;letter-spacing:-0.105px;-webkit-text-stroke:0.45px #0b1220;">Usuário Módulo Educação</div>
<div class="t" style="left:51.80px;top:298.72px;font-size:11.2px;color:#64748b;letter-spacing:-0.190px;">Último acesso: 08/09/2025</div>
<div style="left:252.50px;top:285.20px;width:68.00px;height:20.00px;background:#ef4444;border-radius:10px;"></div>
<svg class="ic" style="left:263.00px;top:290.40px" width="10.1" height="10.1" viewBox="0 0 24 24" fill="none" stroke="#fff" stroke-width="2" stroke-linecap="round" stroke-linejoin="round"><path d="m21.73 18-8-14a2 2 0 0 0-3.48 0l-8 14A2 2 0 0 0 4 21h16a2 2 0 0 0 1.73-3Z"/><path d="M12 9v4"/><path d="M12 17h.01"/></svg>
<div class="t" style="left:277.50px;top:290.32px;font-size:11.2px;color:#fff;letter-spacing:-0.431px;font-weight:700;">Inativo</div>
<div style="left:0.00px;top:334.00px;width:332.00px;height:56.00px;border:1px solid #e2e8f0;border-radius:8px;box-sizing:border-box;background:#fff;"></div>
<div style="left:12.70px;top:348.00px;width:29.00px;height:29.00px;background:#fee2e2;border-radius:50%;"></div>
<div class="t" style="left:22.87px;top:357.02px;font-size:11.2px;color:#b91c1c;-webkit-text-stroke:0.3px #b91c1c;">A</div>
<div class="t" style="left:51.80px;top:349.00px;font-size:13px;color:#0b1220;letter-spacing:-0.105px;-webkit-text-stroke:0.45px #0b1220;">Usuário Módulo Educação</div>
<div class="t" style="left:51.80px;top:365.52px;font-size:11.2px;color:#64748b;letter-spacing:-0.190px;">Último acesso: 09/09/2025</div>
<div style="left:252.50px;top:352.00px;width:68.00px;height:20.00px;background:#ef4444;border-radius:10px;"></div>
<svg class="ic" style="left:263.00px;top:357.20px" width="10.1" height="10.1" viewBox="0 0 24 24" fill="none" stroke="#fff" stroke-width="2" stroke-linecap="round" stroke-linejoin="round"><path d="m21.73 18-8-14a2 2 0 0 0-3.48 0l-8 14A2 2 0 0 0 4 21h16a2 2 0 0 0 1.73-3Z"/><path d="M12 9v4"/><path d="M12 17h.01"/></svg>
<div class="t" style="left:277.50px;top:357.12px;font-size:11.2px;color:#fff;letter-spacing:-0.431px;font-weight:700;">Inativo</div>
</div>
</body></html>
